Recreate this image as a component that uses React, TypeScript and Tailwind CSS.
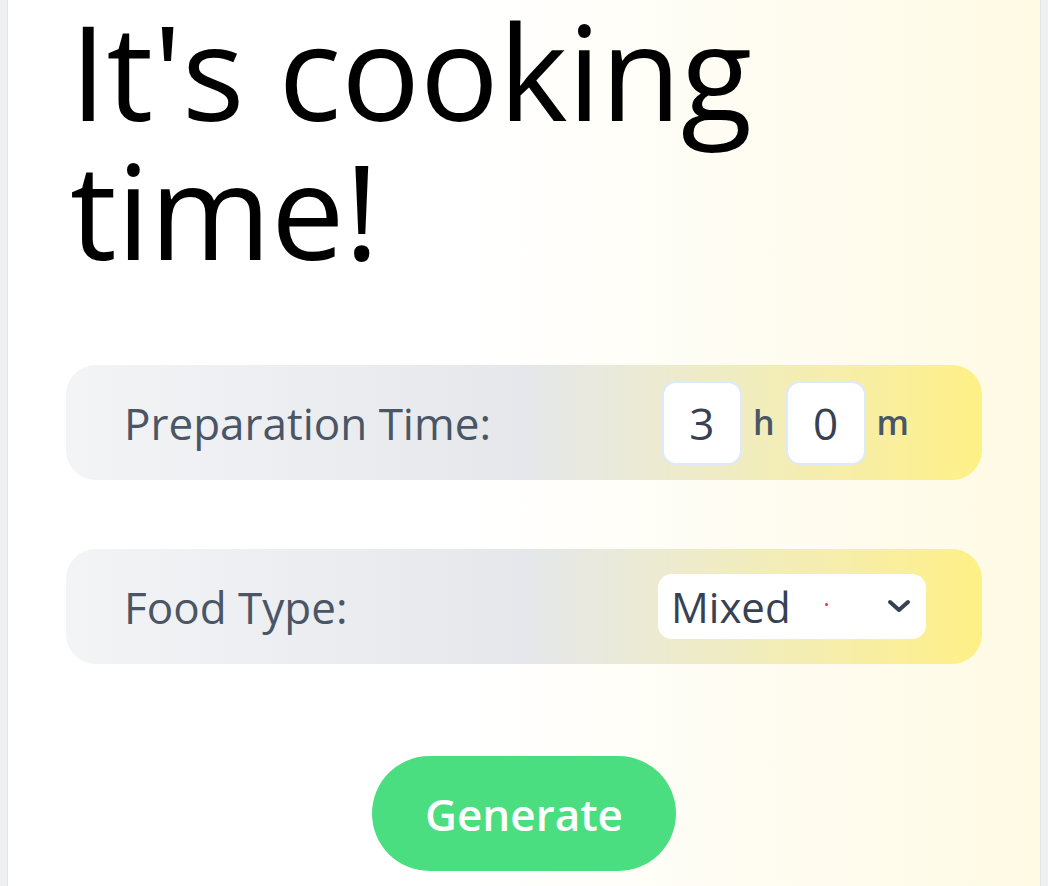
import { useState } from 'react'

const font = { fontFamily: '"Open Sans", "Noto Sans", sans-serif' }

const TimeBox = ({ value, onChange }: { value: string, onChange: (v: string) => void }) => (
  <input
    value={value}
    onChange={e => onChange(e.target.value)}
    className="w-[80px] h-[84px] bg-white border-2 border-blue-100 rounded-[14px] text-center text-[44px] text-gray-700 outline-none"
  />
)

export default function App() {
  const [hours, setHours] = useState('3')
  const [minutes, setMinutes] = useState('0')
  const [food, setFood] = useState('Mixed')

  return (
    <div className="min-h-screen bg-[#eef0f1] flex" style={font}>
      <div className="flex-1 mx-[7px] border-x border-[#e3e5e6] bg-linear-to-r from-white from-45% to-[#fefae4] h-[886px] overflow-hidden">
        <h1 className="text-[131px] leading-[139px] text-black pl-[62px] pt-[1px] tracking-[0px]">
          It's cooking<br />time!
        </h1>

        <div className="mx-[58px] mt-[86px] flex flex-col gap-[69px]">
          <div className="h-[115px] rounded-[30px] bg-linear-to-r from-gray-100 via-gray-200 to-yellow-200 flex items-center justify-between pl-[58px] pr-[73px]">
            <span className="text-[44px] text-gray-600 font-medium">Preparation Time:</span>
            <div className="flex items-center">
              <TimeBox value={hours} onChange={setHours} />
              <span className="text-[34px] text-gray-600 font-semibold mx-[11px]">h</span>
              <TimeBox value={minutes} onChange={setMinutes} />
              <span className="text-[34px] text-gray-600 font-semibold ml-[11px]">m</span>
            </div>
          </div>

          <div className="h-[115px] rounded-[30px] bg-linear-to-r from-gray-100 via-gray-200 to-yellow-200 flex items-center justify-between pl-[58px] pr-[56px]">
            <span className="text-[44px] text-gray-600 font-medium">Food Type:</span>
            <div className="relative w-[268px] h-[65px] bg-white rounded-[14px] flex items-center">
              <select
                value={food}
                onChange={e => setFood(e.target.value)}
                className="appearance-none w-full h-full bg-transparent pl-[13px] text-[42px] text-gray-700 outline-none"
              >
                <option>Mixed</option>
                <option>Vegetarian</option>
                <option>Meat</option>
              </select>
              <span className="absolute left-[167px] top-[29px] w-[3px] h-[3px] rounded-full bg-red-500" />
              <svg className="absolute right-[14px] top-[22px] w-[26px] h-[20px] pointer-events-none" viewBox="0 0 26 20" fill="none" stroke="#374151" strokeWidth="4" strokeLinecap="round" strokeLinejoin="round">
                <path d="M4 6l9 8 9-8" />
              </svg>
            </div>
          </div>

          <div className="flex justify-center mt-[23px]">
            <button className="w-[304px] h-[115px] rounded-full bg-[#4ade80] text-white text-[44px] font-semibold">
              Generate
            </button>
          </div>
        </div>
      </div>
    </div>
  )
}
